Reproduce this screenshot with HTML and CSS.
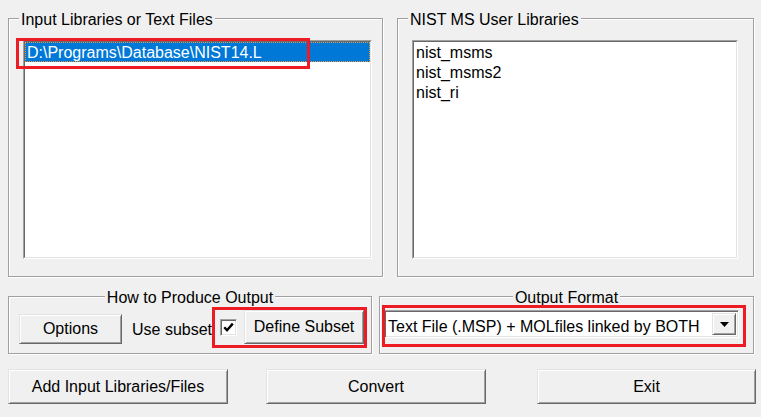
FILE: index.html
```html
<!DOCTYPE html>
<html>
<head>
<meta charset="utf-8">
<link rel="stylesheet" href="styles.css">
</head>
<body>
<div class="window">
  <div class="top-row">
    <fieldset class="group group-input">
      <legend class="legend-left">Input Libraries or Text Files</legend>
      <div class="listbox list-input">
        <div class="list-inner">
          <div class="item selected">D:\Programs\Database\NIST14.L</div>
        </div>
      </div>
    </fieldset>
    <fieldset class="group group-user">
      <legend class="legend-left">NIST MS User Libraries</legend>
      <div class="listbox list-user">
        <div class="list-inner">
          <div class="item">nist_msms</div>
          <div class="item">nist_msms2</div>
          <div class="item">nist_ri</div>
        </div>
      </div>
    </fieldset>
  </div>

  <div class="mid-row">
    <fieldset class="group group-how">
      <legend class="legend-center">How to Produce Output</legend>
      <div class="how-row">
        <button class="btn btn-options">Options</button>
        <span class="use-subset">Use subset</span>
        <span class="checkbox">
          <svg width="13" height="13" viewBox="0 0 13 13"><path d="M2.3 6.3 L5 9.3 L10.8 2.6" fill="none" stroke="#000" stroke-width="2.4"/></svg>
        </span>
        <button class="btn btn-define">Define Subset</button>
      </div>
    </fieldset>
    <fieldset class="group group-format">
      <legend class="legend-center">Output Format</legend>
      <div class="combo">
        <span class="combo-text">Text File (.MSP) + MOLfiles linked by BOTH</span>
        <span class="combo-btn"><svg width="9" height="5" viewBox="0 0 9 5"><path d="M0 0 H9 L4.5 5 Z" fill="#000"/></svg></span>
      </div>
    </fieldset>
  </div>

  <div class="bottom-row">
    <button class="btn btn-big btn-add">Add Input Libraries/Files</button>
    <button class="btn btn-big btn-convert">Convert</button>
    <button class="btn btn-big btn-exit">Exit</button>
  </div>

  <div class="mark mark-list"></div>
  <div class="mark mark-define"></div>
  <div class="mark mark-combo"></div>
</div>
</body>
</html>
```
FILE: styles.css
```css
html, body {
  margin: 0;
  padding: 0;
  background: #f0f0f0;
}
.window {
  position: relative;
  width: 761px;
  height: 417px;
  box-sizing: border-box;
  padding: 8px 0 0 8px;
  background: #f0f0f0;
  font-family: "Liberation Sans", Arial, sans-serif;
  font-size: 16px;
  color: #000;
  overflow: hidden;
}
.top-row, .mid-row, .bottom-row {
  display: flex;
  align-items: flex-start;
}
.top-row { gap: 14px; }
.mid-row { gap: 7px; margin-top: 9px; }
.bottom-row { margin-top: 15px; }

.group {
  margin: 0;
  padding: 0;
  min-width: 0;
  box-sizing: border-box;
  border: 1px solid #a0a0a0;
  box-shadow: inset 1px 1px 0 #fff, 1px 1px 0 #fff;
}
.group legend {
  line-height: 16px;
  padding: 4px 2px 0;
  background: #f0f0f0;
}
.legend-left { margin-left: 10px; }
.legend-center { margin-left: auto; margin-right: auto; }

.group-input { width: 375px; }
.group-user { width: 357px; }
.group-how { width: 364px; }
.group-format { width: 375px; }

.listbox {
  box-sizing: border-box;
  height: 219px;
  border: 1px solid;
  border-color: #a0a0a0 #fff #fff #a0a0a0;
}
.list-inner {
  box-sizing: border-box;
  height: 100%;
  border: 1px solid;
  border-color: #696969 #e3e3e3 #e3e3e3 #696969;
  background: #fff;
}
.list-input { margin: 12px 10px 17px 14px; }
.list-user { margin: 12px 15px 17px 14px; }

.item {
  line-height: 16px;
  border: 1px solid transparent;
  padding: 2px 1px 0;
  white-space: nowrap;
}
.item.selected {
  background: #0078d7;
  color: #fff;
  border: 1px dotted #e8973a;
}

.btn {
  box-sizing: border-box;
  margin: 0;
  padding: 0;
  font-family: inherit;
  font-size: 16px;
  color: #000;
  background: #f0f0f0;
  border: 1px solid;
  border-color: #e3e3e3 #696969 #696969 #e3e3e3;
  box-shadow: inset 1px 1px 0 #fff, inset -1px -1px 0 #a0a0a0;
  text-align: center;
}

.how-row {
  display: flex;
  align-items: flex-end;
  margin: 4px 0 9px 10px;
}
.btn-options { width: 103px; height: 30px; }
.use-subset {
  margin-left: 10px;
  line-height: 18px;
  margin-bottom: 5px;
}
.checkbox {
  box-sizing: border-box;
  width: 17px;
  height: 17px;
  margin-left: 8px;
  margin-bottom: 8px;
  border: 1px solid;
  border-color: #a0a0a0 #fff #fff #a0a0a0;
  box-shadow: inset 1px 1px 0 #696969, inset -1px -1px 0 #e3e3e3;
  background: #fff;
  display: flex;
  align-items: center;
  justify-content: center;
}
.btn-define { width: 120px; height: 34px; margin-left: 7px; }

.combo {
  box-sizing: border-box;
  display: flex;
  align-items: stretch;
  width: 355px;
  height: 28px;
  margin: 4px 15px 15px 4px;
  border: 1px solid;
  border-color: #a0a0a0 #fff #fff #a0a0a0;
  box-shadow: inset 1px 1px 0 #696969, inset -1px -1px 0 #e3e3e3;
  background: #fff;
  padding: 2px;
}
.combo-text {
  flex: 1;
  line-height: 21px;
  padding-top: 3px;
  padding-left: 1px;
  white-space: nowrap;
}
.combo-btn {
  box-sizing: border-box;
  width: 24px;
  display: flex;
  align-items: center;
  justify-content: center;
  background: #f0f0f0;
  border: 1px solid;
  border-color: #e3e3e3 #696969 #696969 #e3e3e3;
  box-shadow: inset 1px 1px 0 #fff, inset -1px -1px 0 #a0a0a0;
}

.btn-big { height: 35px; }
.btn-add { width: 220px; }
.btn-convert { width: 220px; margin-left: 38px; }
.btn-exit { width: 219px; margin-left: 51px; }

.mark {
  position: absolute;
  box-sizing: border-box;
  border: 3px solid #ed1c24;
}
.mark-list { left: 16px; top: 38px; width: 294px; height: 31px; }
.mark-define { left: 212px; top: 307px; width: 155px; height: 41px; }
.mark-combo { left: 382px; top: 305px; width: 364px; height: 42px; }
```
